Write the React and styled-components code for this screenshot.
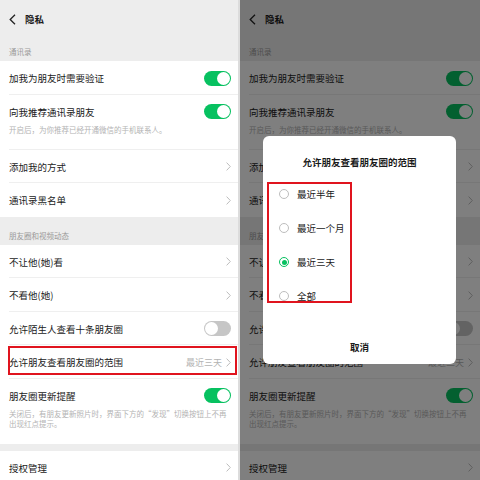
import React from "react";
import styled, { createGlobalStyle } from "styled-components";

const GlobalStyle = createGlobalStyle`
  html, body {
    margin: 0;
    padding: 0;
    background: #ededed;
  }
  #root {
    width: 480px;
    height: 480px;
    overflow: hidden;
  }
  * {
    box-sizing: border-box;
  }
`;

const Page = styled.div`
  display: flex;
  width: 480px;
  height: 480px;
  font-family: "Noto Sans CJK SC", "Noto Sans", sans-serif;
  color: #1a1a1a;
`;

const Screen = styled.div`
  position: relative;
  width: 240px;
  height: 480px;
  overflow: hidden;
  background: #ededed;
  border-right: ${(p) => (p.$edge ? "2px solid #dcdcdc" : "none")};
`;

const Header = styled.div`
  display: flex;
  align-items: center;
  gap: 9px;
  height: 33px;
  padding: 5px 0 0 9px;
`;

const Title = styled.div`
  font-size: 9.5px;
  font-weight: 700;
  line-height: 12px;
`;

const SectionLabel = styled.div`
  padding: 14px 9px 4px;
  font-size: 7.5px;
  line-height: 10px;
  color: #9a9a9a;
`;

const Group = styled.div`
  background: #fff;
`;

const Gap = styled.div`
  height: 7px;
`;

const Item = styled.div`
  position: relative;
  margin-left: 9px;
  padding: 11px 7px 0 0;
  border-bottom: 1px solid ${(p) => (p.$last ? "transparent" : "#efefef")};

  ${(p) =>
    p.$marked &&
    `
    &::after {
      content: "";
      position: absolute;
      left: -1px;
      right: 1px;
      top: 1px;
      bottom: 3px;
      border: 2px solid #e0141e;
    }
  `}
`;

const Main = styled.div`
  display: flex;
  align-items: center;
  justify-content: space-between;
  height: 12px;
  margin-bottom: ${(p) => (p.$sub ? "7px" : "9.5px")};
`;

const Label = styled.span`
  font-size: 9.5px;
  line-height: 12px;
  white-space: nowrap;
`;

const Sub = styled.div`
  padding-bottom: 14px;
  font-size: 7.5px;
  line-height: 10px;
  color: #b3b3b3;
  white-space: pre-line;
`;

const Trail = styled.span`
  display: flex;
  align-items: center;
  gap: 4px;
`;

const Value = styled.span`
  font-size: 9px;
  color: #b3b3b3;
`;

const Switch = styled.span`
  position: relative;
  display: block;
  width: 27px;
  height: 15px;
  border-radius: 8px;
  background: ${(p) => (p.$on ? "#07c160" : "#c6c6c6")};

  &::after {
    content: "";
    position: absolute;
    top: 1px;
    left: ${(p) => (p.$on ? "13px" : "1px")};
    width: 13px;
    height: 13px;
    border-radius: 50%;
    background: #fff;
  }
`;

const Shade = styled.div`
  position: absolute;
  inset: 0;
  background: rgba(0, 0, 0, 0.5);
`;

const Dialog = styled.div`
  position: absolute;
  top: 136px;
  left: 23px;
  width: 193px;
  height: 228px;
  display: flex;
  flex-direction: column;
  border-radius: 6px;
  background: #fff;
`;

const DialogTitle = styled.div`
  padding-top: 20px;
  font-size: 9.5px;
  font-weight: 700;
  line-height: 12px;
  text-align: center;
`;

const Options = styled.div`
  margin-top: 9px;
  display: flex;
  flex-direction: column;
`;

const Option = styled.div`
  display: flex;
  align-items: center;
  gap: 8px;
  height: 34px;
  padding-left: 16px;
  font-size: 9.5px;
`;

const Radio = styled.span`
  position: relative;
  display: block;
  width: 10px;
  height: 10px;
  border-radius: 50%;
  border: 1px solid ${(p) => (p.$checked ? "#07c160" : "#bdbdbd")};

  &::after {
    content: "";
    display: ${(p) => (p.$checked ? "block" : "none")};
    position: absolute;
    inset: 1.5px;
    border-radius: 50%;
    background: #07c160;
  }
`;

const Marker = styled.div`
  position: absolute;
  top: 46px;
  left: 4px;
  width: 85px;
  height: 121px;
  border: 2px solid #e0141e;
`;

const Cancel = styled.div`
  margin-top: auto;
  height: 34px;
  display: flex;
  align-items: center;
  justify-content: center;
  font-size: 9.5px;
  font-weight: 700;
`;

function Back() {
  return (
    <svg width="7" height="11" viewBox="0 0 7 11">
      <polyline points="6,0.8 1.2,5.5 6,10.2" fill="none" stroke="#222" strokeWidth="1.3" />
    </svg>
  );
}

function Chevron() {
  return (
    <svg width="5" height="9" viewBox="0 0 5 9">
      <polyline points="0.6,0.6 4.3,4.5 0.6,8.4" fill="none" stroke="#bcbcbc" strokeWidth="1" />
    </svg>
  );
}

function Row({ label, sub, toggle, value, last, marked }) {
  return (
    <Item $last={last} $marked={marked}>
      <Main $sub={!!sub}>
        <Label>{label}</Label>
        <Trail>
          {value && <Value>{value}</Value>}
          {toggle === undefined ? <Chevron /> : <Switch $on={toggle} />}
        </Trail>
      </Main>
      {sub && <Sub>{sub}</Sub>}
    </Item>
  );
}

function Privacy({ marked }) {
  return (
    <>
      <Header>
        <Back />
        <Title>隐私</Title>
      </Header>
      <SectionLabel>通讯录</SectionLabel>
      <Group>
        <Row label="加我为朋友时需要验证" toggle={true} />
        <Row
          label="向我推荐通讯录朋友"
          toggle={true}
          sub="开启后，为你推荐已经开通微信的手机联系人。"
        />
        <Row label="添加我的方式" />
        <Row label="通讯录黑名单" last />
      </Group>
      <SectionLabel>朋友圈和视频动态</SectionLabel>
      <Group>
        <Row label="不让他(她)看" />
        <Row label="不看他(她)" />
        <Row label="允许陌生人查看十条朋友圈" toggle={false} />
        <Row label="允许朋友查看朋友圈的范围" value="最近三天" marked={marked} />
        <Row
          label="朋友圈更新提醒"
          toggle={true}
          sub={"关闭后，有朋友更新照片时，界面下方的“发现”切换按钮上不再\n出现红点提示。"}
          last
        />
      </Group>
      <Gap />
      <Group>
        <Row label="授权管理" last />
      </Group>
    </>
  );
}

const ranges = ["最近半年", "最近一个月", "最近三天", "全部"];

export default function App() {
  return (
    <Page>
      <GlobalStyle />
      <Screen $edge>
        <Privacy marked />
      </Screen>
      <Screen>
        <Privacy />
        <Shade />
        <Dialog>
          <DialogTitle>允许朋友查看朋友圈的范围</DialogTitle>
          <Options>
            {ranges.map((r) => (
              <Option key={r}>
                <Radio $checked={r === "最近三天"} />
                {r}
              </Option>
            ))}
          </Options>
          <Cancel>取消</Cancel>
          <Marker />
        </Dialog>
      </Screen>
    </Page>
  );
}
